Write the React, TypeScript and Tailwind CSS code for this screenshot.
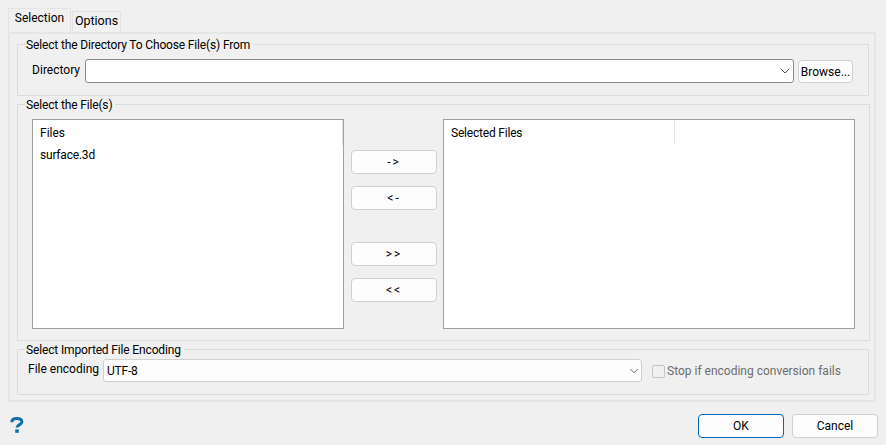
import { ChevronDown } from 'lucide-react';

const font = { fontFamily: 'Roboto, sans-serif' };

function Group({ title, className, children }: { title: string; className: string; children: React.ReactNode }) {
  return (
    <fieldset className={`border border-[#dcdcdc] ${className}`}>
      <legend className="ml-[7px] h-4 pl-px pr-[3px] text-[12px] leading-[18px] tracking-[-0.15px] text-black">{title}</legend>
      {children}
    </fieldset>
  );
}

function ArrowButton({ label, className = '' }: { label: string; className?: string }) {
  return (
    <button className={`h-6 w-[86px] rounded-[4px] border border-[#d0d0d0] bg-[#fdfdfd] text-[12px] leading-none text-black tracking-[2px] ${className}`}>
      {label}
    </button>
  );
}

export default function App() {
  return (
    <div style={font} className="flex h-[445px] w-[886px] flex-col overflow-hidden bg-[#f0f0f0] pl-2 pr-2 pt-2 text-[12px] text-black">
      {/* tabs */}
      <div className="relative z-10 flex h-6 items-end">
        <div className="flex h-6 w-[63px] items-center justify-center border border-b-0 border-[#e3e3e3] bg-[#f0f0f0] pb-[5px] text-[12px]">Selection</div>
        <div className="ml-px flex h-[21px] w-[49px] items-center justify-center border border-b-0 border-[#e3e3e3] bg-[#f0f0f0] pb-px text-[12.5px]">Options</div>
      </div>

      <div className="h-[370px] w-[868px] border-2 border-[#e6e6e6] pl-[7px] pr-[5px] pt-[2px]">
        <Group title="Select the Directory To Choose File(s) From" className="h-[60px]">
          <div className="flex items-start px-[14px] pt-[7px]">
            <span className="w-[53px] whitespace-nowrap pr-[5px] pt-[3px] text-right leading-4">Directory</span>
            <div className="flex h-6 w-[709px] items-center justify-end rounded-[3px] border border-[#8a8a8a] bg-white">
              <ChevronDown size={16} strokeWidth={1.5} className="text-[#555555]" />
            </div>
            <button className="ml-1 mt-px h-[23px] w-[55px] rounded-[4px] border border-[#d0d0d0] bg-[#fdfdfd] pt-px text-[12px] leading-none">Browse...</button>
          </div>
        </Group>

        <Group title="Select the File(s)" className="h-[245px]">
          <div className="flex items-start px-[14px] pt-[7px]">
            <div className="h-[210px] w-[312px] border border-[#a0a0a0] bg-white">
              <div className="flex h-[25px]">
                <div className="h-full w-[310px] border-r border-[#e5e5e5] pl-[7px] pt-[5px] leading-4">Files</div>
              </div>
              <div className="pl-[7px] pt-[2px] leading-4 tracking-[-0.2px]">surface.3d</div>
            </div>

            <div className="ml-[7px] flex w-[86px] flex-col pt-[31px]">
              <ArrowButton label="->" />
              <ArrowButton label="<-" className="mt-3" />
              <ArrowButton label=">>" className="mt-8" />
              <ArrowButton label="<<" className="mt-3" />
            </div>

            <div className="ml-1.5 h-[210px] w-[412px] border border-[#a0a0a0] bg-white">
              <div className="flex h-[25px]">
                <div className="h-full w-[231px] border-r border-[#e5e5e5] pl-[7px] pt-[5px] leading-4 tracking-[-0.2px]">Selected Files</div>
              </div>
            </div>
          </div>
        </Group>

        <Group title="Select Imported File Encoding" className="h-[54px]">
          <div className="flex items-start px-[9px] pt-[2px]">
            <span className="w-[76px] whitespace-nowrap pr-1 pt-[2px] text-right leading-4">File encoding</span>
            <div className="flex h-[23px] w-[539px] items-center justify-between rounded-[3px] border border-[#d0d0d0] bg-[#fdfdfd] pl-[3px]">
              <span className="tracking-[-0.2px]">UTF-8</span>
              <ChevronDown size={14} strokeWidth={1.5} className="text-[#555555]" />
            </div>
            <div className="ml-2.5 mt-[6px] h-[13px] w-[13px] rounded-[2px] border border-[#c4c4c4] bg-[#f0f0f0]" />
            <span className="ml-0.5 mt-1 whitespace-nowrap leading-4 text-[#6d6d6d]">Stop if encoding conversion fails</span>
          </div>
        </Group>
      </div>

      <div className="flex items-start pt-3">
        <svg width="14" height="16" viewBox="0 0 14 16" className="ml-[2px] mt-[3px]" fill="none">
          <path d="M1.8 5.2C1.8 2.8 3.9 1.6 6.8 1.6C9.8 1.6 11.9 2.9 11.9 5C11.9 7.6 7 7.6 7 10.6" stroke="#0f6fa6" strokeWidth="3" />
          <rect x="5.2" y="12.4" width="3.6" height="3.4" fill="#0f6fa6" />
        </svg>
        <button className="ml-auto h-6 w-[86px] rounded-[4px] border border-[#0067c0] bg-[#fdfdfd] text-[12px] leading-none">OK</button>
        <button className="ml-2 h-6 w-[86px] rounded-[4px] border border-[#d0d0d0] bg-[#fdfdfd] text-[12px] leading-none">Cancel</button>
      </div>
    </div>
  );
}
